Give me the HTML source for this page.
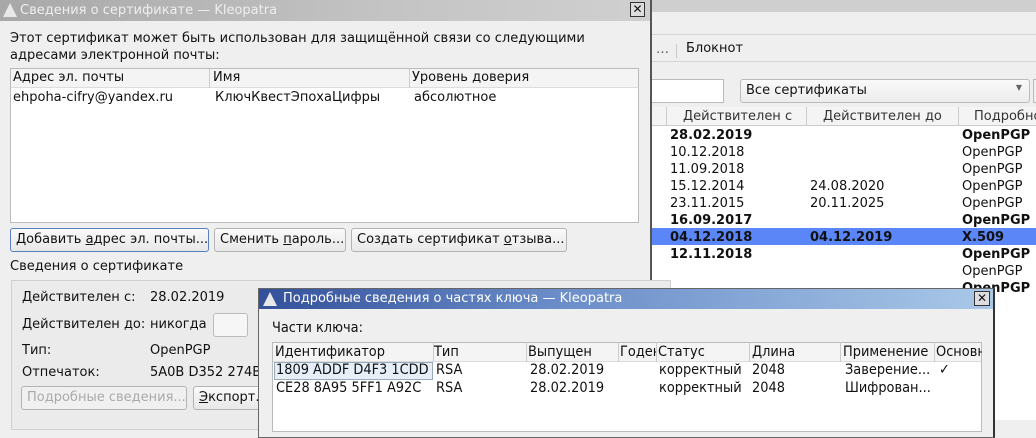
<!DOCTYPE html>
<html><head><meta charset="utf-8"><style>
*{margin:0;padding:0;box-sizing:border-box}
body{width:1036px;height:420px;overflow:hidden;position:relative;background:#efefef;font-family:"DejaVu Sans","Liberation Sans",sans-serif;font-size:13px;color:#111}
.a{position:absolute;white-space:nowrap}
.c{font-family:"DejaVu Sans Condensed","DejaVu Sans",sans-serif;font-stretch:condensed;font-size:14.4px}
.btn{position:absolute;height:24px;border:1px solid #b4b4b4;border-radius:3px;background:linear-gradient(#fafafa,#e8e8e8);padding:3px 5px;white-space:nowrap}
.b{font-weight:bold}
</style></head><body>
<!-- background main window -->
<div class="a" style="left:652px;top:0;width:384px;height:12px;background:#cfcfcf"></div>
<div class="a" style="left:652px;top:12px;width:384px;height:23px;background:#efefef;border-bottom:1px solid #d4d4d4"></div>
<div class="a" style="left:652px;top:36px;width:384px;height:26px;background:#efefef;border-bottom:1px solid #d4d4d4"></div>
<div class="a" style="left:656px;top:42px;color:#555">…</div>
<div class="a" style="left:676px;top:44px;width:1px;height:14px;background:#c8c8c8"></div>
<div class="a" style="left:686px;top:41px">Блокнот</div>
<div class="a" style="left:652px;top:79px;width:72px;height:24px;background:#fff;border:1px solid #bbb;border-left:none"></div>
<div class="a" style="left:740px;top:79px;width:290px;height:24px;border:1px solid #bbb;border-radius:3px;background:linear-gradient(#fafafa,#ececec);padding:3px 5px">Все сертификаты<span style="position:absolute;right:7px;top:3px;font-size:8px;color:#666">▼</span></div>
<div class="a" style="left:1033px;top:79px;width:4px;height:24px;border:1px solid #bbb"></div>
<div class="a" style="left:652px;top:107px;width:384px;height:19px;background:#f4f4f4;border-bottom:1px solid #ccc"></div>
<div class="a" style="left:666px;top:107px;width:1px;height:19px;background:#ccc"></div>
<div class="a" style="left:806px;top:107px;width:1px;height:19px;background:#ccc"></div>
<div class="a" style="left:958px;top:107px;width:1px;height:19px;background:#ccc"></div>
<div class="a" style="left:683px;top:109px;color:#333">Действителен с</div>
<div class="a" style="left:823px;top:109px;color:#333">Действителен до</div>
<div class="a" style="left:974px;top:109px;color:#333">Подробно</div>
<div class="a" style="left:652px;top:126px;width:384px;height:294px;background:#fff"></div>
<div class="a" style="left:652px;top:228px;width:384px;height:17px;background:#5b86f8"></div>
<div class="a" style="left:670px;top:127px;line-height:17px">
<div class="b">28.02.2019</div><div>10.12.2018</div><div>11.09.2018</div><div>15.12.2014</div><div>23.11.2015</div><div class="b">16.09.2017</div><div class="b">04.12.2018</div><div class="b">12.11.2018</div></div>
<div class="a" style="left:810px;top:127px;line-height:17px"><div>&nbsp;</div><div>&nbsp;</div><div>&nbsp;</div><div>24.08.2020</div><div>20.11.2025</div><div>&nbsp;</div><div class="b">04.12.2019</div></div>
<div class="a" style="left:962px;top:127px;line-height:17px"><div class="b">OpenPGP</div><div>OpenPGP</div><div>OpenPGP</div><div>OpenPGP</div><div>OpenPGP</div><div class="b">OpenPGP</div><div class="b">X.509</div><div class="b">OpenPGP</div><div>OpenPGP</div><div class="b">OpenPGP</div></div>

<!-- left dialog -->
<div class="a" style="left:0;top:0;width:652px;height:420px;background:#efefef;border-right:2px solid #555"></div>
<div class="a" style="left:0;top:0;width:650px;height:21px;background:linear-gradient(90deg,#a8a8a8,#c4c4c4 60%,#d0d0d0)"></div>
<div class="a" style="left:3px;top:3px;width:14px;height:14px;background:#e8e8e8;clip-path:polygon(50% 0,100% 100%,0 100%)"></div>
<div class="a" style="left:20px;top:3px;color:#eee">Сведения о сертификате — Kleopatra</div>
<div class="a" style="left:630px;top:2px;width:15px;height:15px;border:1px solid #333;background:#ddd;font-size:12px;line-height:12px;text-align:center">✕</div>
<div class="a" style="left:10px;top:30px;line-height:17px">Этот сертификат может быть использован для защищённой связи со следующими<br>адресами электронной почты:</div>
<div class="a" style="left:10px;top:68px;width:629px;height:155px;background:#fff;border:1px solid #bbb"></div>
<div class="a" style="left:11px;top:69px;width:627px;height:19px;background:#f4f4f4;border-bottom:1px solid #ddd"></div>
<div class="a" style="left:209px;top:69px;width:1px;height:19px;background:#ccc"></div>
<div class="a" style="left:409px;top:69px;width:1px;height:19px;background:#ccc"></div>
<div class="a" style="left:13px;top:70px">Адрес эл. почты</div>
<div class="a" style="left:213px;top:70px">Имя</div>
<div class="a" style="left:412px;top:70px">Уровень доверия</div>
<div class="a" style="left:13px;top:90px">ehpoha-cifry@yandex.ru</div>
<div class="a" style="left:215px;top:90px">КлючКвестЭпохаЦифры</div>
<div class="a" style="left:414px;top:90px">абсолютное</div>
<div class="btn" style="left:10px;top:228px;width:199px;border-color:#5b80c0">Добавить <u>а</u>дрес эл. почты...</div>
<div class="btn" style="left:214px;top:228px;width:132px">Сменить <u>п</u>ароль...</div>
<div class="btn" style="left:351px;top:228px;width:216px">Создать сертификат <u>о</u>тзыва...</div>
<div class="a" style="left:10px;top:259px">Сведения о сертификате</div>
<div class="a" style="left:11px;top:280px;width:660px;height:150px;border:1px solid #d0d0d0;background:#ebebeb"></div>
<div class="a" style="left:22px;top:290px">Действителен с:</div><div class="a" style="left:150px;top:290px">28.02.2019</div>
<div class="a" style="left:22px;top:317px">Действителен до:</div><div class="a" style="left:150px;top:317px">никогда</div>
<div class="a" style="left:213px;top:313px;width:35px;height:24px;border:1px solid #bbb;border-radius:3px;background:#f6f6f6"></div>
<div class="a" style="left:22px;top:343px">Тип:</div><div class="a" style="left:150px;top:343px">OpenPGP</div>
<div class="a" style="left:22px;top:365px">Отпечаток:</div><div class="a" style="left:150px;top:365px">5A0B D352 274B</div>
<div class="btn" style="left:21px;top:386px;width:166px;color:#aaa;background:#f0f0f0">Подробные сведения...</div>
<div class="btn" style="left:193px;top:386px;width:80px"><u>Э</u>кспорт...</div>

<!-- front dialog -->
<div class="a" style="left:258px;top:288px;width:737px;height:150px;background:#efefef;border:1px solid #666;border-right:2px solid #333"></div>
<div class="a" style="left:259px;top:289px;width:734px;height:20px;background:linear-gradient(90deg,#33509a,#6a8cc8 40%,#a9c8e8)"></div>
<div class="a" style="left:263px;top:292px;width:14px;height:14px;background:#e8e8e8;clip-path:polygon(50% 0,100% 100%,0 100%)"></div>
<div class="a" style="left:283px;top:291px;color:#fff">Подробные сведения о частях ключа — Kleopatra</div>
<div class="a" style="left:974px;top:291px;width:16px;height:15px;border:1px solid #333;background:#ddd;font-size:12px;line-height:12px;text-align:center">✕</div>
<div class="a c" style="left:272px;top:320px">Части ключа:</div>
<div class="a" style="left:272px;top:342px;width:710px;height:90px;background:#fff;border:1px solid #bbb"></div>
<div class="a" style="left:273px;top:343px;width:708px;height:19px;background:#f4f4f4;border-bottom:1px solid #ddd"></div>
<div class="a c" style="left:272px;top:342px;width:710px;height:70px;overflow:hidden">
<div class="a" style="left:3px;top:2px">Идентификатор</div>
<div class="a" style="left:161px;top:0;width:1px;height:20px;background:#ccc"></div>
<div class="a" style="left:162px;top:2px">Тип</div>
<div class="a" style="left:254px;top:0;width:1px;height:20px;background:#ccc"></div>
<div class="a" style="left:256px;top:2px">Выпущен</div>
<div class="a" style="left:346px;top:0;width:1px;height:20px;background:#ccc"></div>
<div class="a" style="left:348px;top:2px;width:36px;overflow:hidden">Годен</div>
<div class="a" style="left:384px;top:0;width:1px;height:20px;background:#ccc"></div>
<div class="a" style="left:386px;top:2px">Статус</div>
<div class="a" style="left:477px;top:0;width:1px;height:20px;background:#ccc"></div>
<div class="a" style="left:480px;top:2px">Длина</div>
<div class="a" style="left:568px;top:0;width:1px;height:20px;background:#ccc"></div>
<div class="a" style="left:571px;top:2px">Применение</div>
<div class="a" style="left:662px;top:0;width:1px;height:20px;background:#ccc"></div>
<div class="a" style="left:664px;top:2px;width:46px;overflow:hidden">Основной</div>
<div class="a" style="left:2px;top:20px;width:159px;height:18px;background:#e6eef8;border:1px solid #9ab"></div>
<div class="a" style="left:4px;top:20px">1809 ADDF D4F3 1CDD</div>
<div class="a" style="left:4px;top:38px">CE28 8A95 5FF1 A92C</div>
<div class="a" style="left:164px;top:20px">RSA</div><div class="a" style="left:164px;top:38px">RSA</div>
<div class="a" style="left:258px;top:20px">28.02.2019</div><div class="a" style="left:258px;top:38px">28.02.2019</div>
<div class="a" style="left:387px;top:20px">корректный</div><div class="a" style="left:387px;top:38px">корректный</div>
<div class="a" style="left:480px;top:20px">2048</div><div class="a" style="left:480px;top:38px">2048</div>
<div class="a" style="left:573px;top:20px">Заверение...</div><div class="a" style="left:573px;top:38px">Шифрован...</div>
<div class="a" style="left:667px;top:20px">✓</div>
</div>
</body></html>
